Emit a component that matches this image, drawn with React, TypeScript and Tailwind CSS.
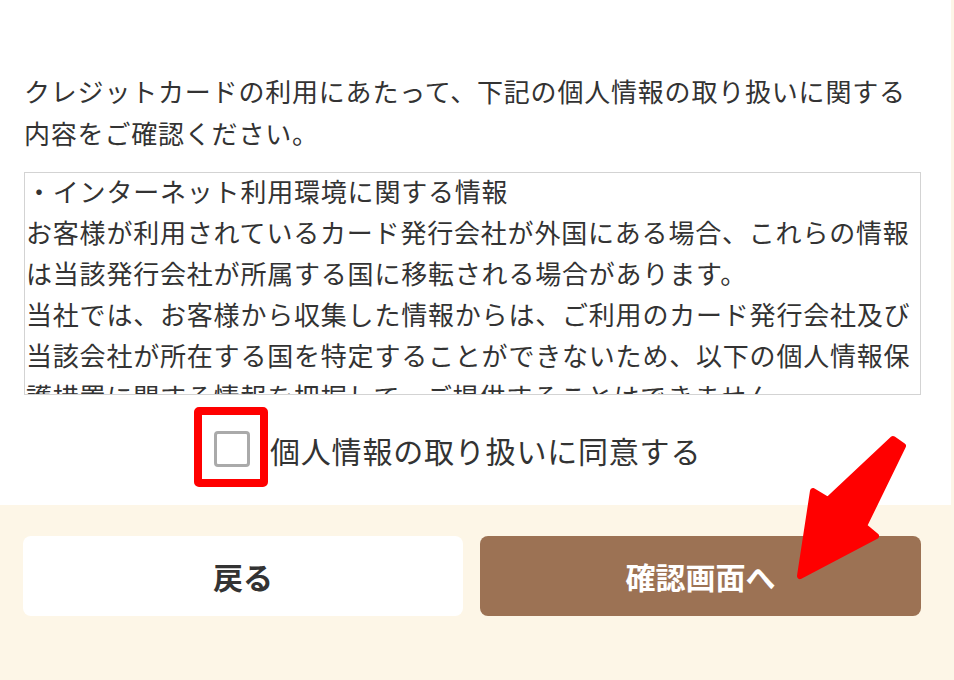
import React from "react";

export default function App() {
  return (
    <div className="relative w-[954px] h-[680px] overflow-hidden bg-[#fdf6e7] font-['Noto_Sans_CJK_JP','Noto_Sans',sans-serif] text-[#333333]">
      <div className="w-[951px] h-[505px] bg-white pt-[70px] pl-[24px]">
        <p className="text-[26px] leading-[42px] tracking-[0.8px] w-[900px]">
          クレジットカードの利用にあたって、下記の個人情報の取り扱いに関する内容をご確認ください。
        </p>
        <div className="mt-[18px] w-[897px] h-[223px] border border-[#d3d3d3] overflow-hidden pl-[1px] text-[26px] leading-[41px] tracking-[0.8px]">
          <div className="-mt-[3px]">
            <p>・インターネット利用環境に関する情報</p>
            <p>
              お客様が利用されているカード発行会社が外国にある場合、これらの情報は当該発行会社が所属する国に移転される場合があります。
            </p>
            <p>
              当社では、お客様から収集した情報からは、ご利用のカード発行会社及び当該会社が所在する国を特定することができないため、以下の個人情報保護措置に関する情報を把握して、ご提供することはできません。
            </p>
          </div>
        </div>
        <div className="mt-[29px] flex items-center pl-[190px]">
          <div className="relative w-[36px] h-[36px] shrink-0">
            <div className="w-[36px] h-[36px] rounded-[4px] border-[3px] border-[#aaaaaa] bg-white" />
            <div className="absolute left-[-20px] right-[-18px] top-[-24px] bottom-[-20px] rounded-[5px] border-[8px] border-[#ff0000]" />
          </div>
          <span className="ml-[20px] text-[30px] leading-[45px] tracking-[0.8px] mt-[4px]">
            個人情報の取り扱いに同意する
          </span>
        </div>
      </div>
      <div className="flex gap-[17px] pt-[31px] pl-[23px]">
        <button className="w-[440px] h-[80px] rounded-[8px] bg-white text-[30px] font-bold text-[#333333] flex items-center justify-center">
          戻る
        </button>
        <button className="w-[441px] h-[80px] rounded-[8px] bg-[#9c7254] text-[30px] font-bold text-white flex items-center justify-center">
          確認画面へ
        </button>
      </div>
      <svg
        className="absolute inset-0 pointer-events-none"
        width="954"
        height="680"
        viewBox="0 0 954 680"
      >
        <polygon
          points="893,439 903,446 864,526 876,536 800,576 813,491 828,500"
          fill="#ff0000"
          stroke="#ff0000"
          strokeWidth="6"
          strokeLinejoin="round"
        />
      </svg>
    </div>
  );
}
